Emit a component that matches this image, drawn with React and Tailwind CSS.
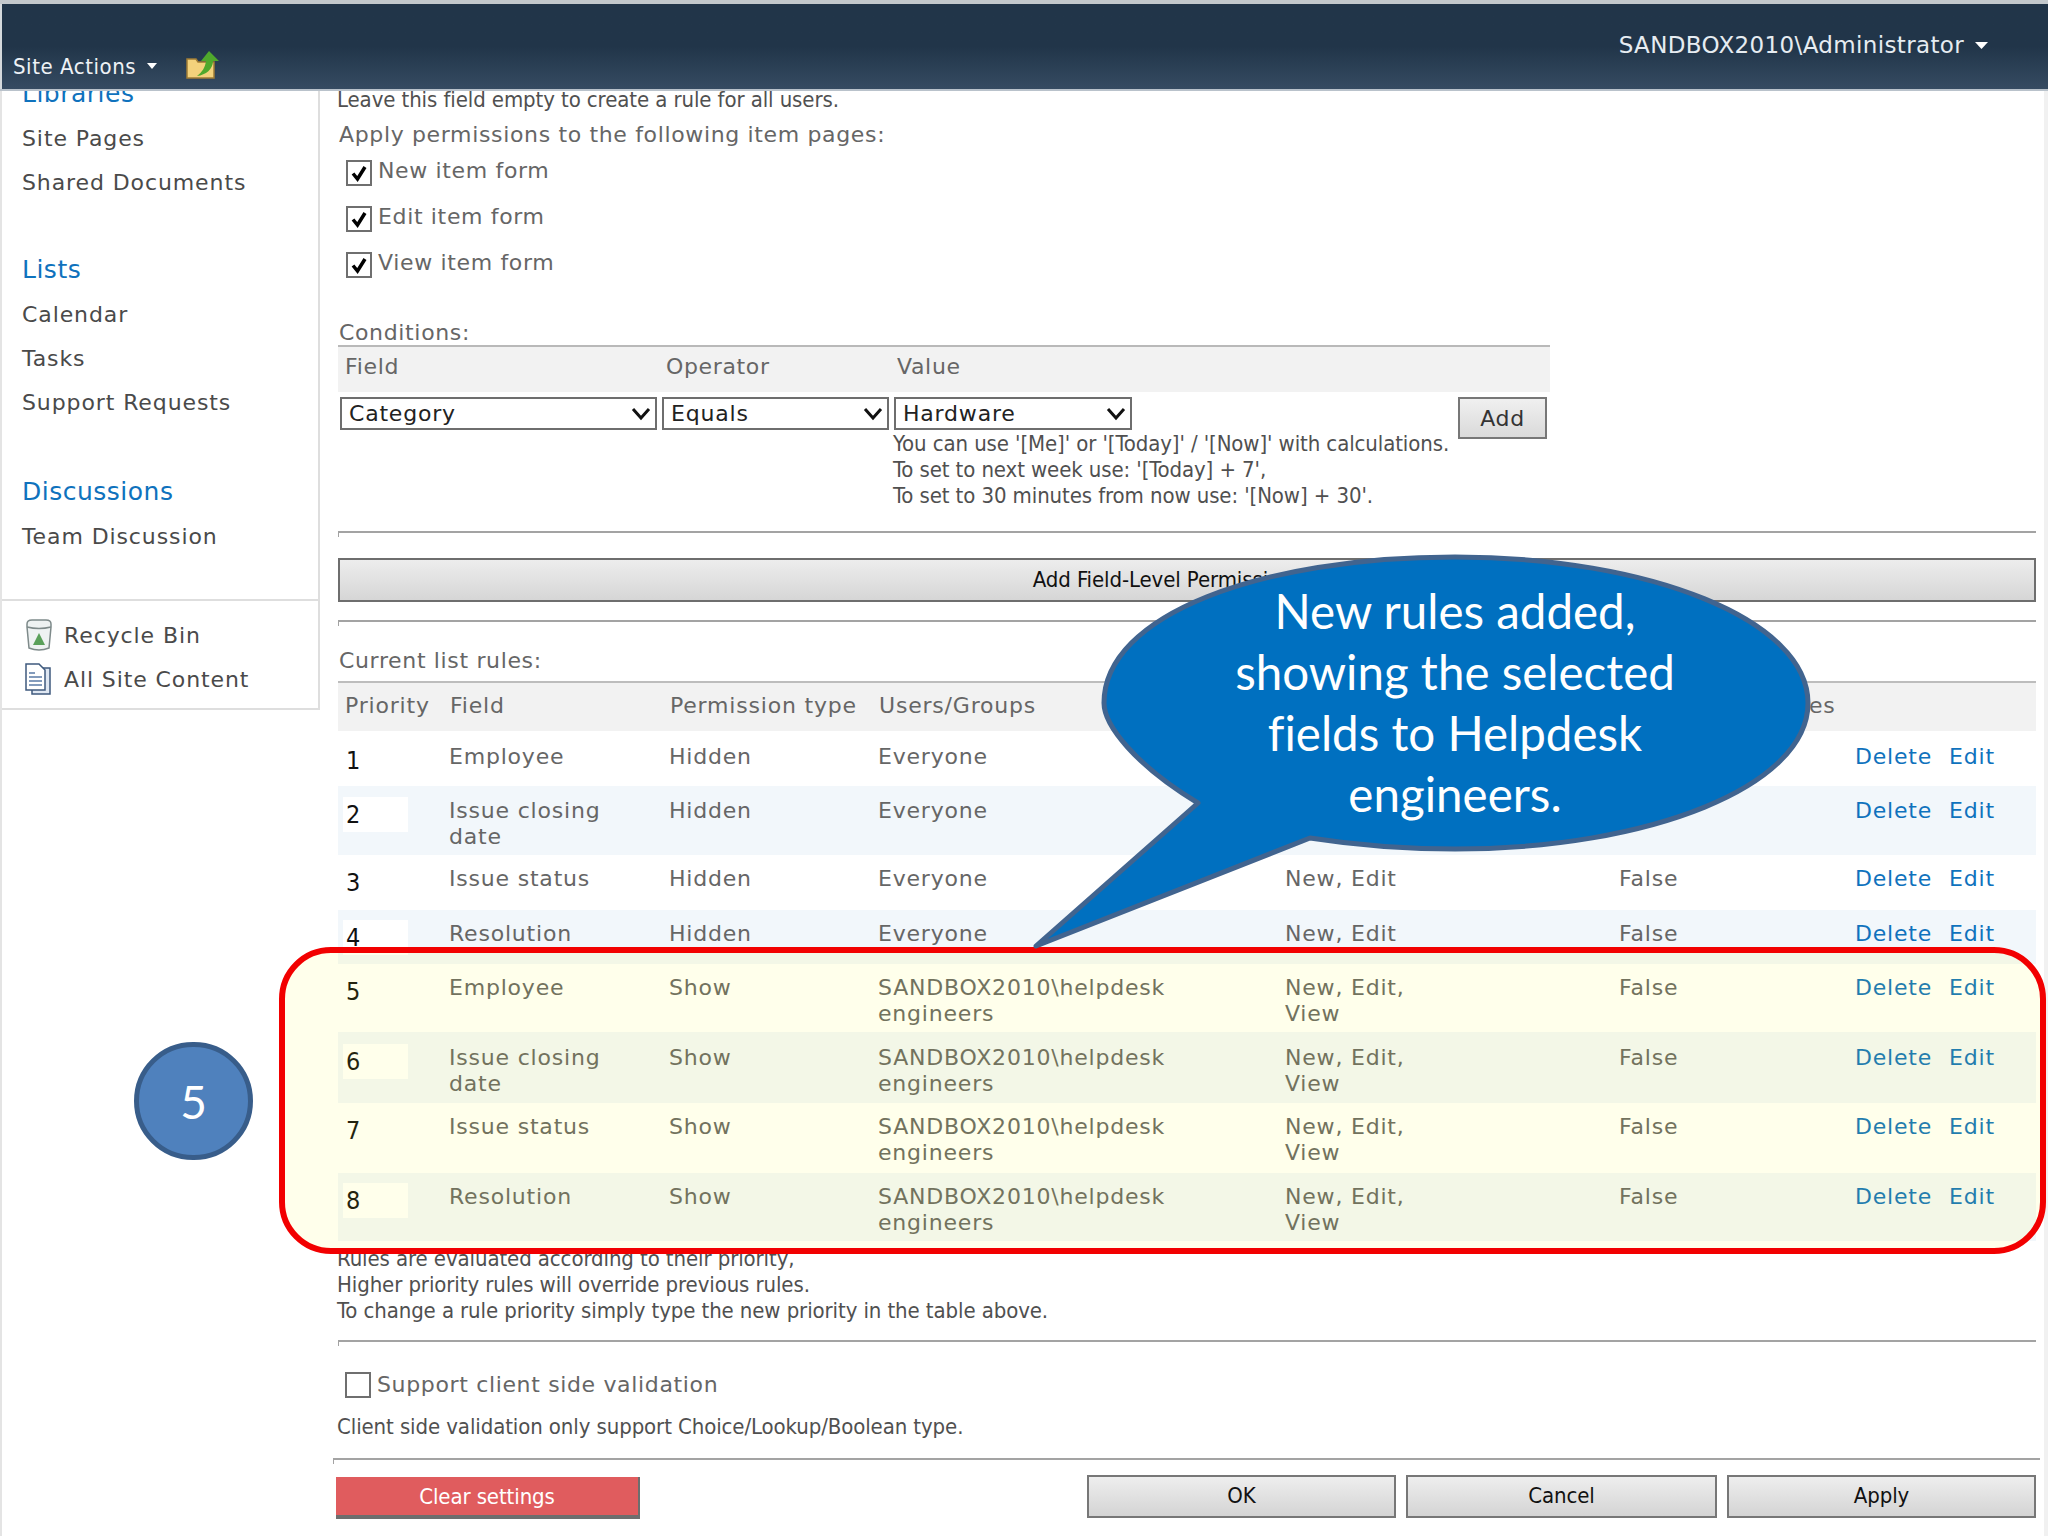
import React from 'react';

const verdana = "font-['DejaVu_Sans',sans-serif]";
const tahoma = "font-['DejaVu_Sans_Condensed','Noto_Sans',sans-serif]";

const rules = [
  { no: 1, field: ['Employee'], type: 'Hidden', users: ['Everyone'], pages: ['New, Edit'], h: 'h-[55px]', pt: 'pt-[13px]' },
  { no: 2, field: ['Issue closing', 'date'], type: 'Hidden', users: ['Everyone'], pages: ['New, Edit'], h: 'h-[69px]', pt: 'pt-[12px]', alt: true, input: true },
  { no: 3, field: ['Issue status'], type: 'Hidden', users: ['Everyone'], pages: ['New, Edit'], h: 'h-[55px]', pt: 'pt-[11px]' },
  { no: 4, field: ['Resolution'], type: 'Hidden', users: ['Everyone'], pages: ['New, Edit'], h: 'h-[54px]', pt: 'pt-[11px]', alt: true, input: true },
  { no: 5, field: ['Employee'], type: 'Show', users: ['SANDBOX2010\\helpdesk', 'engineers'], pages: ['New, Edit,', 'View'], h: 'h-[68px]', pt: 'pt-[11px]' },
  { no: 6, field: ['Issue closing', 'date'], type: 'Show', users: ['SANDBOX2010\\helpdesk', 'engineers'], pages: ['New, Edit,', 'View'], h: 'h-[71px]', pt: 'pt-[13px]', alt: true, input: true },
  { no: 7, field: ['Issue status'], type: 'Show', users: ['SANDBOX2010\\helpdesk', 'engineers'], pages: ['New, Edit,', 'View'], h: 'h-[70px]', pt: 'pt-[11px]' },
  { no: 8, field: ['Resolution'], type: 'Show', users: ['SANDBOX2010\\helpdesk', 'engineers'], pages: ['New, Edit,', 'View'], h: 'h-[68px]', pt: 'pt-[11px]', alt: true, input: true },
];

function Lines({ items }) {
  return items.map(t => <div key={t} className="whitespace-nowrap">{t}</div>);
}

function Rule() {
  return <div className="h-[6px] border-t-2 border-l border-[#a3a3a3]" />;
}

function Check({ checked }) {
  return (
    <div className="w-[26px] h-[26px] border-2 border-[#6f6f6f] bg-white flex items-center justify-center shrink-0">
      {checked && (
        <svg width="18" height="18" viewBox="0 0 18 18">
          <path d="M3 9.5 L7.5 15 L15 3" fill="none" stroke="#000" strokeWidth="3.5" />
        </svg>
      )}
    </div>
  );
}

function Dropdown({ label, width }) {
  return (
    <div className={`${width} h-[33px] border-2 border-[#6e6e6e] bg-white flex items-center justify-between pl-[7px] pr-[4px] text-[22px] tracking-[0.8px] text-[#222]`}>
      <span>{label}</span>
      <svg width="20" height="14" viewBox="0 0 20 14">
        <path d="M2 2 L10 11 L18 2" fill="none" stroke="#111" strokeWidth="3" />
      </svg>
    </div>
  );
}

function GreyButton({ label, width }) {
  return (
    <button className={`${width} h-[43px] border-2 border-[#777] bg-gradient-to-b from-[#eeeeee] to-[#d4d4d4] font-['DejaVu_Sans_Condensed','Noto_Sans',sans-serif] text-[22px] text-[#111] tracking-[-0.1px] pb-[2px]`}>
      {label}
    </button>
  );
}

function NavLink({ children }) {
  return <div className="h-[44px] flex items-center pl-[20px] text-[22px] tracking-[0.9px] text-[#4a4a4a]">{children}</div>;
}

function NavHead({ children }) {
  return <div className="h-[44px] flex items-center pl-[20px] text-[25px] tracking-[0.5px] text-[#0f72bd]">{children}</div>;
}

export default function App() {
  return (
    <div className={`relative w-[2048px] h-[1536px] overflow-hidden bg-white ${verdana}`}>
      {/* top bar */}
      <div className="h-[4px] bg-[#c3c8cc]" />
      <div className="h-[85px] border-l-2 border-[#d5d9dc] bg-gradient-to-b from-[#213549] from-50% to-[#364b62] flex items-end justify-between pl-[11px]">
        <div className="flex items-center h-[46px] text-white">
          <span className={`${tahoma} text-[22px] tracking-[0.55px] text-[#eef2f6]`}>Site Actions</span>
          <svg className="ml-[11px]" width="10" height="6" viewBox="0 0 10 6"><path d="M0 0 H10 L5 6 Z" fill="#fff" /></svg>
          <svg className="ml-[29px] -mt-[2px]" width="34" height="30" viewBox="0 0 34 30">
            <path d="M1 9 H10 L12 12 H28 V28 H1 Z" fill="#f3d27c" stroke="#a07c34" strokeWidth="1.5" />
            <path d="M11 26 C16 22 19 18 20 11 H15 L23 1 L33 11 H27 C27 19 20 25 11 26 Z" fill="#4fa82c" />
          </svg>
        </div>
        <div className="flex items-center self-start mt-[24px] pr-[60px] text-[23px] tracking-[0.35px] text-[#e6ecf1]">
          <span>SANDBOX2010\Administrator</span>
          <svg className="ml-[11px]" width="13" height="7" viewBox="0 0 13 7"><path d="M0 0 H13 L6.5 7 Z" fill="#fff" /></svg>
        </div>
      </div>
      <div className="h-[2px] bg-[#b9c2cb]" />

      <div className="flex">
        {/* left nav */}
        <div className="w-[320px] h-[1445px] border-l-2 border-[#e4e4e4] shrink-0">
          <div className="h-[619px] overflow-hidden border-r-2 border-b-2 border-[#dedede]">
            <div className="-mt-[2px] h-[16px] overflow-hidden">
              <div className="-mt-[14px] pl-[20px] text-[25px] tracking-[0.5px] text-[#0f72bd]">Libraries</div>
            </div>
            <div className="mt-[11px]">
              <NavLink>Site Pages</NavLink>
              <NavLink>Shared Documents</NavLink>
            </div>
            <div className="mt-[44px]">
              <NavHead>Lists</NavHead>
              <NavLink>Calendar</NavLink>
              <NavLink>Tasks</NavLink>
              <NavLink>Support Requests</NavLink>
            </div>
            <div className="mt-[46px]">
              <NavHead>Discussions</NavHead>
              <NavLink>Team Discussion</NavLink>
            </div>
            <div className="mt-[41px] pt-[12px] border-t-2 border-[#dedede]">
              <div className="h-[44px] flex items-center gap-[10px] pl-[22px] text-[22px] tracking-[0.9px] text-[#4a4a4a]">
                <svg width="30" height="32" viewBox="0 0 30 32">
                  <path d="M3 5 Q3 1 8 1 H22 Q27 1 27 5 V8 L25 29 Q15 33 5 29 L3 8 Z" fill="#eef2f2" stroke="#7e8a8a" strokeWidth="1.5" />
                  <path d="M3 8 Q15 11 27 8" fill="none" stroke="#7e8a8a" strokeWidth="1.5" />
                  <path d="M15 14 L21 26 H9 Z" fill="#5aa05a" />
                </svg>
                Recycle Bin
              </div>
              <div className="h-[44px] flex items-center gap-[10px] pl-[22px] text-[22px] tracking-[0.9px] text-[#4a4a4a]">
                <svg width="30" height="32" viewBox="0 0 30 32">
                  <path d="M8 5 H26 V31 H8 Z" fill="#dfe7f2" stroke="#3f5a7e" strokeWidth="1.5" />
                  <path d="M2 1 H15 L21 7 V27 H2 Z" fill="#fff" stroke="#3f5a7e" strokeWidth="1.5" />
                  <path d="M5 10 H11 M5 14 H18 M5 18 H18 M5 22 H18" stroke="#5b7ba6" strokeWidth="1.5" />
                </svg>
                All Site Content
              </div>
            </div>
          </div>
        </div>

        {/* main form */}
        <div className="w-[1698px] ml-[18px] text-[#666] text-[22px] tracking-[0.65px]">
          <div className={`${tahoma} h-[20px] leading-[20px] text-[22px] tracking-[-0.1px] text-[#505050] -ml-[1px] -mt-[1px]`}>Leave this field empty to create a rule for all users.</div>
          <div className="mt-[13px] ml-[1px] h-[24px] leading-[24px]">Apply permissions to the following item pages:</div>
          <div className="mt-[13px] ml-[8px] flex flex-col gap-[20px]">
            {['New item form', 'Edit item form', 'View item form'].map(t => (
              <div key={t} className="flex h-[26px] gap-[6px]">
                <Check checked />
                <span className="-mt-[2px] leading-[26px]">{t}</span>
              </div>
            ))}
          </div>

          <div className="mt-[43px] ml-[1px] h-[24px] leading-[24px]">Conditions:</div>
          <div className="w-[1212px]">
            <div className="h-[47px] border-t-2 border-[#b9b9b9] bg-[#f2f2f2] flex items-center">
              <span className="w-[328px] pl-[7px] -mt-[7px]">Field</span>
              <span className="w-[231px] -mt-[7px]">Operator</span>
              <span className="-mt-[7px]">Value</span>
            </div>
            <div className="flex pt-[5px] h-[122px]">
              <div className="w-[1120px]">
                <div className="flex gap-[5px] ml-[2px]">
                  <Dropdown label="Category" width="w-[317px]" />
                  <Dropdown label="Equals" width="w-[227px]" />
                  <Dropdown label="Hardware" width="w-[238px]" />
                </div>
                <div className={`${tahoma} ml-[555px] mt-[1px] text-[22px] tracking-[-0.1px] leading-[26px] text-[#505050] whitespace-nowrap`}>
                  <div>You can use '[Me]' or '[Today]' / '[Now]' with calculations.</div>
                  <div>To set to next week use: '[Today] + 7',</div>
                  <div>To set to 30 minutes from now use: '[Now] + 30'.</div>
                </div>
              </div>
              <button className="w-[89px] h-[42px] border-2 border-[#777] bg-gradient-to-b from-[#f0f0f0] to-[#dadada] text-[22px] text-[#333]">Add</button>
            </div>
          </div>

          <div className="mt-[17px]"><Rule /></div>
          <button className={`${tahoma} mt-[21px] w-full h-[44px] border-2 border-[#6e6e6e] bg-gradient-to-b from-[#ededed] to-[#d6d6d6] text-[22px] tracking-[-0.1px] text-[#111] pb-[2px]`}>
            Add Field-Level Permission Rule
          </button>
          <div className="mt-[18px]"><Rule /></div>

          <div className="mt-[23px] ml-[1px] h-[24px] leading-[24px]">Current list rules:</div>

          <div className="mt-[8px] tracking-[0.8px]">
            <div className="h-[50px] border-t-2 border-[#bdbdbd] bg-[#f2f2f2] flex items-center">
              <span className="w-[112px] pl-[7px] -mt-[4px]">Priority</span>
              <span className="w-[220px] -mt-[4px]">Field</span>
              <span className="w-[209px] -mt-[4px]">Permission type</span>
              <span className="w-[406px] -mt-[4px]">Users/Groups</span>
              <span className="w-[346px] -mt-[4px]">Item pages</span>
              <span className="-mt-[4px]">Read-only / Rules</span>
            </div>
            {rules.map(r => (
              <div key={r.no} className={`${r.h} ${r.pt} flex leading-[26px] ${r.alt ? 'bg-[#f2f7fb]' : 'bg-white'}`}>
                <div className="w-[111px] pl-[5px]">
                  <div className={`w-[65px] -mt-[1px] h-[35px] pl-[3px] flex items-center text-[25px] tracking-normal text-[#111] ${tahoma} ${r.input ? 'bg-white' : ''}`}>
                    {r.no}
                  </div>
                </div>
                <div className="w-[220px]"><Lines items={r.field} /></div>
                <div className="w-[209px]">{r.type}</div>
                <div className="w-[407px]"><Lines items={r.users} /></div>
                <div className="w-[334px]"><Lines items={r.pages} /></div>
                <div className="w-[236px]">False</div>
                <div className="flex gap-[17px] text-[#0f72bd]">
                  <span>Delete</span>
                  <span>Edit</span>
                </div>
              </div>
            ))}
          </div>

          <div className={`${tahoma} mt-[5px] text-[22px] tracking-[-0.1px] leading-[26px] text-[#505050] -ml-[1px] whitespace-nowrap`}>
            <div>Rules are evaluated according to their priority,</div>
            <div>Higher priority rules will override previous rules.</div>
            <div>To change a rule priority simply type the new priority in the table above.</div>
          </div>

          <div className="mt-[16px]"><Rule /></div>
          <div className="mt-[26px] ml-[7px] flex h-[26px] gap-[6px]">
            <Check />
            <span className="leading-[26px]">Support client side validation</span>
          </div>
          <div className={`${tahoma} mt-[16px] h-[26px] leading-[26px] text-[22px] tracking-[-0.1px] text-[#505050] -ml-[1px]`}>Client side validation only support Choice/Lookup/Boolean type.</div>

          <div className="mt-[18px] -ml-[5px] w-[1707px]"><Rule /></div>
          <div className="mt-[11px] flex -ml-[2px] items-start">
            <button className={`${tahoma} mt-[2px] w-[305px] h-[42px] bg-[#e05c5e] border-r-2 border-b-4 border-[#6e6e6e] text-[22px] tracking-[-0.1px] text-white`}>
              Clear settings
            </button>
            <div className="ml-[447px] flex gap-[10px]">
              <GreyButton label="OK" width="w-[309px]" />
              <GreyButton label="Cancel" width="w-[311px]" />
              <GreyButton label="Apply" width="w-[309px]" />
            </div>
          </div>
        </div>
        <div className="ml-auto w-[4px] h-[1445px] bg-[#f1f1f1]" />
      </div>

      {/* highlight frame around the new rules */}
      <div className="absolute left-[279px] top-[947px] w-[1767px] h-[307px] rounded-[52px] border-[6px] border-[#f20000] bg-[#ffff00]/[0.08]" />

      {/* callout */}
      <svg className="absolute left-[1020px] top-[545px]" width="800" height="410" viewBox="0 0 800 410">
        <path
          d="M16 401 L178 258 C115 220 84 180 84 158 C84 70 240 12 435 12 C630 12 788 75 788 158 C788 241 630 304 435 304 C385 304 335 300 290 293 Z"
          fill="#0070c0"
          stroke="#41648f"
          strokeWidth="5"
          strokeLinejoin="round"
        />
      </svg>
      <div className="absolute left-[1155px] top-[580px] w-[600px] text-center text-white text-[47.5px] leading-[61px] [font-variant-ligatures:none] font-['Lato',sans-serif]">
        <div>New rules added,</div>
        <div>showing the selected</div>
        <div>fields to Helpdesk</div>
        <div>engineers.</div>
      </div>

      {/* step badge */}
      <div className="absolute left-[134px] top-[1042px] w-[119px] h-[118px] rounded-full bg-[#4f81bd] border-[5px] border-[#385d8a] flex items-center justify-center text-white text-[46px] font-['Lato',sans-serif]">
        5
      </div>
    </div>
  );
}
